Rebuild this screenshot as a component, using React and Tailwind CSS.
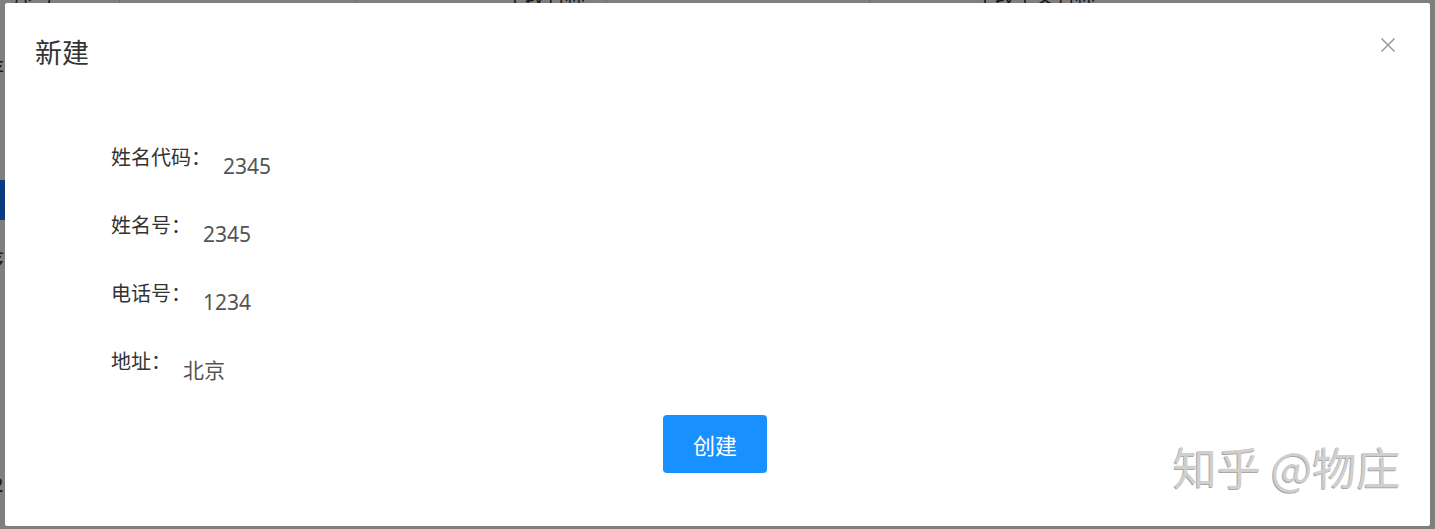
const rows = [
  { label: "姓名代码：", value: "2345" },
  { label: "姓名号：", value: "2345" },
  { label: "电话号：", value: "1234" },
  { label: "地址：", value: "北京" },
];

const cjk = "font-['Noto_Sans_CJK_SC',sans-serif]";

const CloseIcon = () => (
  <svg viewBox="0 0 14 14" className="w-[14px] h-[14px] text-[#999]" fill="none" stroke="currentColor" strokeWidth="1.5">
    <path d="M0.5 0.5L13.5 13.5M13.5 0.5L0.5 13.5" />
  </svg>
);

const BackgroundPage = () => (
  <div className={`w-full h-full bg-white text-[#333] ${cjk}`}>
    <div className="flex -mt-[14px] h-[20px] text-[20px] leading-[20px]">
      <div className="w-[120px] pl-[14px] border-r border-[#ddd]">序号</div>
      <div className="w-[237px] border-r border-[#ddd]"></div>
      <div className="w-[250px] pl-[148px] border-r border-[#ddd] whitespace-nowrap">字段名称</div>
      <div className="w-[263px] border-r border-[#ddd]"></div>
      <div className="pl-[105px] whitespace-nowrap">字段中文名称</div>
    </div>
    <div className="flex flex-col -ml-[16px] w-[40px] text-[20px] leading-[20px]">
      <div className="mt-[52px]">存</div>
      <div className="mt-[102px] h-[40px] bg-[#1677ff]"></div>
      <div className="mt-[30px]">序</div>
      <div className="mt-[65px] pl-[8px] font-['Noto_Sans',sans-serif]">1</div>
      <div className="mt-[50px] pl-[8px] font-['Noto_Sans',sans-serif]">1</div>
      <div className="mt-[50px] pl-[8px] font-['Noto_Sans',sans-serif]">2</div>
    </div>
  </div>
);

export default function App() {
  return (
    <div className="relative w-[1435px] h-[529px] overflow-hidden">
      <BackgroundPage />
      <div className="absolute inset-0 bg-black/50"></div>
      <div
        className={`absolute left-[5px] top-[3px] w-[1425px] h-[523px] bg-white rounded-[2px] flex flex-col ${cjk}`}
      >
        <div className="flex justify-between items-start pt-[35px] pl-[30px] pr-[35px]">
          <h2 className="text-[27px] leading-[27px] text-[#333]">新建</h2>
          <CloseIcon />
        </div>

        <div className="flex flex-col gap-[39px] pt-[82px] pl-[106px]">
          {rows.map((row) => (
            <div key={row.label} className="flex items-start gap-[12px]">
              <span className="text-[20px] leading-[20px] text-[#333]">{row.label}</span>
              <span className="mt-[9px] text-[21px] leading-[20px] text-[#555] font-['Noto_Sans','Noto_Sans_CJK_SC',sans-serif]">
                {row.value}
              </span>
            </div>
          ))}
        </div>

        <div className="flex justify-center pr-[5px] mt-[35px]">
          <button className="w-[104px] h-[58px] rounded-[4px] bg-[#1890ff] text-white text-[22px] leading-none">
            创建
          </button>
        </div>

        <div className="absolute left-[1168px] top-[441px] text-[44px] leading-[44px] whitespace-nowrap text-[#cfcfcf] [text-shadow:-1px_1px_0_#a8a8a8]">
          知乎 @物庄
        </div>
      </div>
    </div>
  );
}
